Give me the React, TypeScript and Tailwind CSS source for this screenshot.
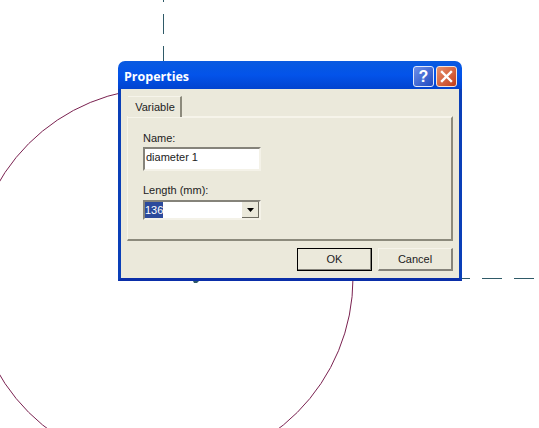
// Properties dialog (XP Luna look) floating over a CAD sketch
const UI_FONT = "font-['Liberation_Sans',sans-serif]"

function Canvas() {
  return (
    <svg className="absolute inset-0" width={539} height={428} fill="none">
      <circle cx={163} cy={278} r={190} stroke="#7a2150" strokeWidth={1} />
      <line x1={163.5} y1={-18} x2={163.5} y2={62} stroke="#2f5a68" strokeWidth={1} strokeDasharray="20 12" />
      <line x1={450} y1={278.5} x2={539} y2={278.5} stroke="#2f5a68" strokeWidth={1} strokeDasharray="20 12" />
      <path d="M193 281h6l-2 2h-3z" fill="#2f5a68" />
    </svg>
  )
}

function TitleButtons() {
  return (
    <div className="flex gap-[2px]">
      <div className="flex h-[21px] w-[21px] items-center justify-center rounded-[3px] border border-[#dfe8fa] bg-gradient-to-br from-[#6f8fe8] to-[#2048c0] text-[16px] font-bold leading-none text-white">
        ?
      </div>
      <div className="flex h-[21px] w-[21px] items-center justify-center rounded-[3px] border border-[#f2e4dc] bg-gradient-to-br from-[#e8906c] to-[#c23a14]">
        <svg width={13} height={13} viewBox="0 0 13 13">
          <path d="M2 2l9 9M11 2l-9 9" stroke="#fff" strokeWidth={2.4} strokeLinecap="square" />
        </svg>
      </div>
    </div>
  )
}

function Dialog() {
  return (
    <div className={`${UI_FONT} absolute left-[118px] top-[61px] flex h-[220px] w-[344px] flex-col overflow-hidden rounded-t-[7px] text-[11px] leading-none text-[#222]`}>
      <div className="flex h-[28px] shrink-0 items-center justify-between bg-gradient-to-b from-[#0a5ae0] via-[#0353ea] to-[#0243cf] pl-[6px] pr-[5px] pt-[3px]">
        <span className="mt-[2px] font-['Open_Sans',sans-serif] text-[12.5px] font-bold text-white">Properties</span>
        <TitleButtons />
      </div>
      <div className="flex min-h-0 flex-1 flex-col border-x-[3px] border-b-[3px] border-x-[#0a3fb8] border-b-[#0a2ea8] bg-[#ebe9db] px-[6px] pt-[7px]">
        <div className="relative z-10 ml-[1px] flex h-[21px] w-[54px] items-center justify-center border-r-2 border-r-[#8c8a7c] border-t border-t-[#f6f4ea] bg-[#ebe9db] pl-[2px]">
          Variable
        </div>
        <div className="-mt-px flex h-[125px] shrink-0 flex-col border-r-2 border-b-2 border-t-2 border-r-[#8c8a7c] border-b-[#8c8a7c] border-t-[#f6f4ea] border-l border-l-[#f6f4ea] pl-[15px] pt-[15px]">
          <span>Name:</span>
          <div className="mt-[3px] flex h-[24px] w-[118px] items-center border-2 border-b-[#f4f2e8] border-l-[#85837a] border-r-[#f4f2e8] border-t-[#85837a] bg-white pb-[3px] pl-[1px]">
            diameter 1
          </div>
          <span className="mt-[14px]">Length (mm):</span>
          <div className="mt-[4px] flex h-[20px] w-[118px] items-center border-2 border-b-[#f4f2e8] border-l-[#85837a] border-r-[#f4f2e8] border-t-[#85837a] bg-white">
            <span className="flex h-full w-[18px] items-center bg-[#2c4a9c] text-white">136</span>
            <span className="ml-auto flex h-full w-[17px] items-center justify-center border-b border-r border-b-[#6e6c62] border-r-[#6e6c62] bg-[#ebe9db]">
              <svg width={7} height={4} viewBox="0 0 7 4">
                <path d="M0 0h7L3.5 4z" fill="#000" />
              </svg>
            </span>
          </div>
        </div>
        <div className="mt-[7px] flex justify-end gap-[6px]">
          <button className="h-[23px] w-[75px] border border-black bg-[#ebe9db] shadow-[inset_-1px_-1px_0_#85837a]">OK</button>
          <button className="h-[23px] w-[75px] border-b-2 border-r-2 border-b-[#85837a] border-r-[#85837a] border-l border-t border-l-[#f6f4ea] border-t-[#f6f4ea] bg-[#ebe9db]">Cancel</button>
        </div>
      </div>
    </div>
  )
}

export default function App() {
  return (
    <div className="relative h-[428px] w-[539px] overflow-hidden bg-white">
      <Canvas />
      <Dialog />
    </div>
  )
}
